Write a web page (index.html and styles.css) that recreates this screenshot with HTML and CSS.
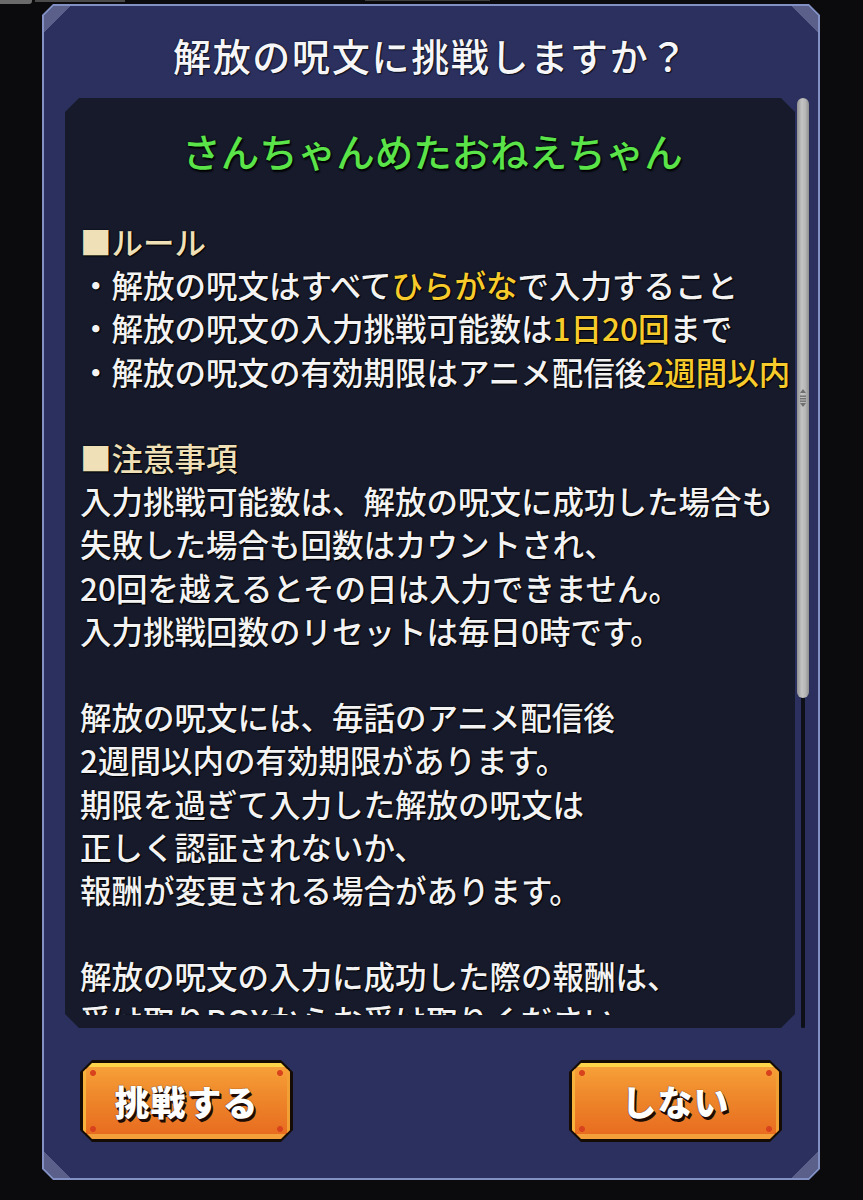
FILE: index.html
```html
<!DOCTYPE html>
<html lang="ja">
<head>
<meta charset="utf-8">
<title>解放の呪文</title>
<link rel="stylesheet" href="styles.css">
</head>
<body>
<div class="topstrip"><span class="chip"></span><span class="bar1"></span><span class="bar2"></span></div>
<div class="frame">
  <div class="panel">
    <h1 class="title">解放の呪文に挑戦しますか？</h1>
    <div class="body-row">
      <div class="content">
        <div class="scroll">
          <p class="keyword">さんちゃんめたおねえちゃん</p>
          <div class="block">
            <p class="head">■ルール</p>
            <p>・解放の呪文はすべて<em>ひらがな</em>で入力すること</p>
            <p>・解放の呪文の入力挑戦可能数は<em>1日20回</em>まで</p>
            <p>・解放の呪文の有効期限はアニメ配信後<em>2週間以内</em></p>
          </div>
          <div class="block">
            <p class="head">■注意事項</p>
            <p>入力挑戦可能数は、解放の呪文に成功した場合も</p>
            <p>失敗した場合も回数はカウントされ、</p>
            <p>20回を越えるとその日は入力できません。</p>
            <p>入力挑戦回数のリセットは毎日0時です。</p>
          </div>
          <div class="block">
            <p>解放の呪文には、毎話のアニメ配信後</p>
            <p>2週間以内の有効期限があります。</p>
            <p>期限を過ぎて入力した解放の呪文は</p>
            <p>正しく認証されないか、</p>
            <p>報酬が変更される場合があります。</p>
          </div>
          <div class="block">
            <p>解放の呪文の入力に成功した際の報酬は、</p>
            <p>受け取りBOXからお受け取りください。</p>
          </div>
        </div>
      </div>
      <div class="scrollbar">
        <div class="thumb">
          <svg class="grip" width="8" height="20" viewBox="0 0 8 20">
            <path d="M4 1 L7 5 L1 5 Z" fill="#6f6f6f"/>
            <rect x="1" y="7.5" width="6" height="1.4" fill="#6f6f6f"/>
            <rect x="1" y="10" width="6" height="1.4" fill="#6f6f6f"/>
            <rect x="1" y="12.5" width="6" height="1.4" fill="#6f6f6f"/>
            <path d="M4 19 L7 15 L1 15 Z" fill="#6f6f6f"/>
          </svg>
        </div>
      </div>
    </div>
    <div class="actions">
      <button class="btn"><span class="face">挑戦する</span></button>
      <button class="btn"><span class="face">しない</span></button>
    </div>
  </div>
</div>
</body>
</html>
```
FILE: styles.css
```css
html, body {
  margin: 0;
  padding: 0;
}
body {
  background: #0b0b0d;
  width: 863px;
  height: 1200px;
  overflow: hidden;
  font-family: "Noto Sans CJK JP", "Noto Sans", sans-serif;
}
.topstrip {
  height: 4px;
  display: flex;
  align-items: flex-start;
  overflow: hidden;
}
.chip {
  width: 32px;
  height: 4px;
  background: #6b6b6b;
  border-bottom-right-radius: 3px;
}
.bar1 {
  margin-left: 3px;
  width: 90px;
  height: 2px;
  background: #4b4b4b;
}
.bar2 {
  margin-left: 240px;
  width: 125px;
  height: 1px;
  background: #3f3f3f;
}
.frame {
  margin-left: 42px;
  width: 778px;
  height: 1176px;
  box-sizing: border-box;
  padding: 2px;
  background: #8290c3;
  clip-path: polygon(11px 0, calc(100% - 11px) 0, 100% 11px, 100% calc(100% - 11px), calc(100% - 11px) 100%, 11px 100%, 0 calc(100% - 11px), 0 11px);
}
.panel {
  height: 100%;
  box-sizing: border-box;
  display: flex;
  flex-direction: column;
  padding-top: 22px;
  background:
    linear-gradient(135deg, #5a6089 0 50%, transparent 50%) left top / 26px 26px no-repeat,
    linear-gradient(225deg, #5a6089 0 50%, transparent 50%) right top / 26px 26px no-repeat,
    linear-gradient(45deg, #5a6089 0 50%, transparent 50%) left bottom / 26px 26px no-repeat,
    linear-gradient(315deg, #5a6089 0 50%, transparent 50%) right bottom / 26px 26px no-repeat,
    #2b305f;
  clip-path: polygon(10px 0, calc(100% - 10px) 0, 100% 10px, 100% calc(100% - 10px), calc(100% - 10px) 100%, 10px 100%, 0 calc(100% - 10px), 0 10px);
}
.title {
  margin: 0;
  height: 60px;
  line-height: 54px;
  text-align: center;
  color: #f6f6f8;
  font-size: 38px;
  font-weight: 500;
  letter-spacing: 1.7px;
  text-shadow: 0 0 2px rgba(0, 0, 0, 0.7), 1px 1px 1px rgba(0, 0, 0, 0.6);
}
.body-row {
  margin-top: 10px;
  height: 930px;
  display: flex;
  padding-left: 21px;
  gap: 2px;
}
.content {
  width: 730px;
  height: 930px;
  box-sizing: border-box;
  padding-bottom: 13px;
  background: #161a2b;
  clip-path: polygon(14px 0, calc(100% - 14px) 0, 100% 14px, 100% calc(100% - 14px), calc(100% - 14px) 100%, 14px 100%, 0 calc(100% - 14px), 0 14px);
}
.scroll {
  height: 100%;
  overflow: hidden;
  box-sizing: border-box;
  padding: 20px 10px 0 15px;
  color: #f3f3f3;
  font-size: 31.5px;
  line-height: 43.2px;
  font-weight: 500;
  text-shadow: 0 0 2px rgba(0, 0, 0, 0.9), 1px 1px 1px #000;
  white-space: nowrap;
}
.scroll p {
  margin: 0;
}
.scroll .keyword {
  margin: 0 0 38px;
  text-align: center;
  font-size: 38.5px;
  line-height: 64px;
  color: #5be34a;
  font-weight: 500;
  text-shadow: 0 0 2px #000, 1px 2px 2px #000;
}
.block {
  margin-bottom: 43.2px;
}
.head {
  color: #efe0b8;
}
.scroll em {
  font-style: normal;
  color: #f8cb2c;
}
.scrollbar {
  width: 12px;
  height: 930px;
  border-radius: 6px;
  background: linear-gradient(90deg, transparent 4px, #0e1019 4px, #0e1019 8px, transparent 8px);
}
.thumb {
  width: 12px;
  height: 600px;
  border-radius: 6px;
  background: linear-gradient(90deg, #929292, #c4c4c4 40%, #b6b6b6 70%, #8e8e8e);
  display: flex;
  align-items: center;
  justify-content: center;
}
.grip {
  display: block;
}
.actions {
  margin-top: 32px;
  display: flex;
  justify-content: space-between;
  padding: 0 36px;
}
.btn {
  width: 213px;
  height: 82px;
  padding: 3px;
  border: none;
  box-sizing: border-box;
  background: #140c05;
  font-family: inherit;
  clip-path: polygon(12px 0, calc(100% - 12px) 0, 100% 12px, 100% calc(100% - 12px), calc(100% - 12px) 100%, 12px 100%, 0 calc(100% - 12px), 0 12px);
}
.face {
  display: flex;
  align-items: center;
  justify-content: center;
  height: 100%;
  padding-bottom: 2px;
  box-sizing: border-box;
  color: #ffffff;
  font-size: 35px;
  font-weight: 900;
  letter-spacing: 1px;
  text-shadow: 0 0 1px #2a1106, 2px 3px 0 #1e0b03, 1px 2px 0 #1e0b03;
  background:
    radial-gradient(circle at 10px 10px, #d8421c 2.5px, transparent 3.5px),
    radial-gradient(circle at calc(100% - 10px) 10px, #d8421c 2.5px, transparent 3.5px),
    radial-gradient(circle at 10px calc(100% - 10px), #d8421c 2.5px, transparent 3.5px),
    radial-gradient(circle at calc(100% - 10px) calc(100% - 10px), #d8421c 2.5px, transparent 3.5px),
    linear-gradient(90deg, #f7b23c 0 3px, transparent 3px, transparent calc(100% - 3px), #f0a034 calc(100% - 3px)),
    linear-gradient(180deg, #ffd64a 0 4px, #f7a038 4px, #ef8a2c 40%, #e86c20 calc(100% - 5px), #f4a03a calc(100% - 5px));
  clip-path: polygon(9px 0, calc(100% - 9px) 0, 100% 9px, 100% calc(100% - 9px), calc(100% - 9px) 100%, 9px 100%, 0 calc(100% - 9px), 0 9px);
}
```
